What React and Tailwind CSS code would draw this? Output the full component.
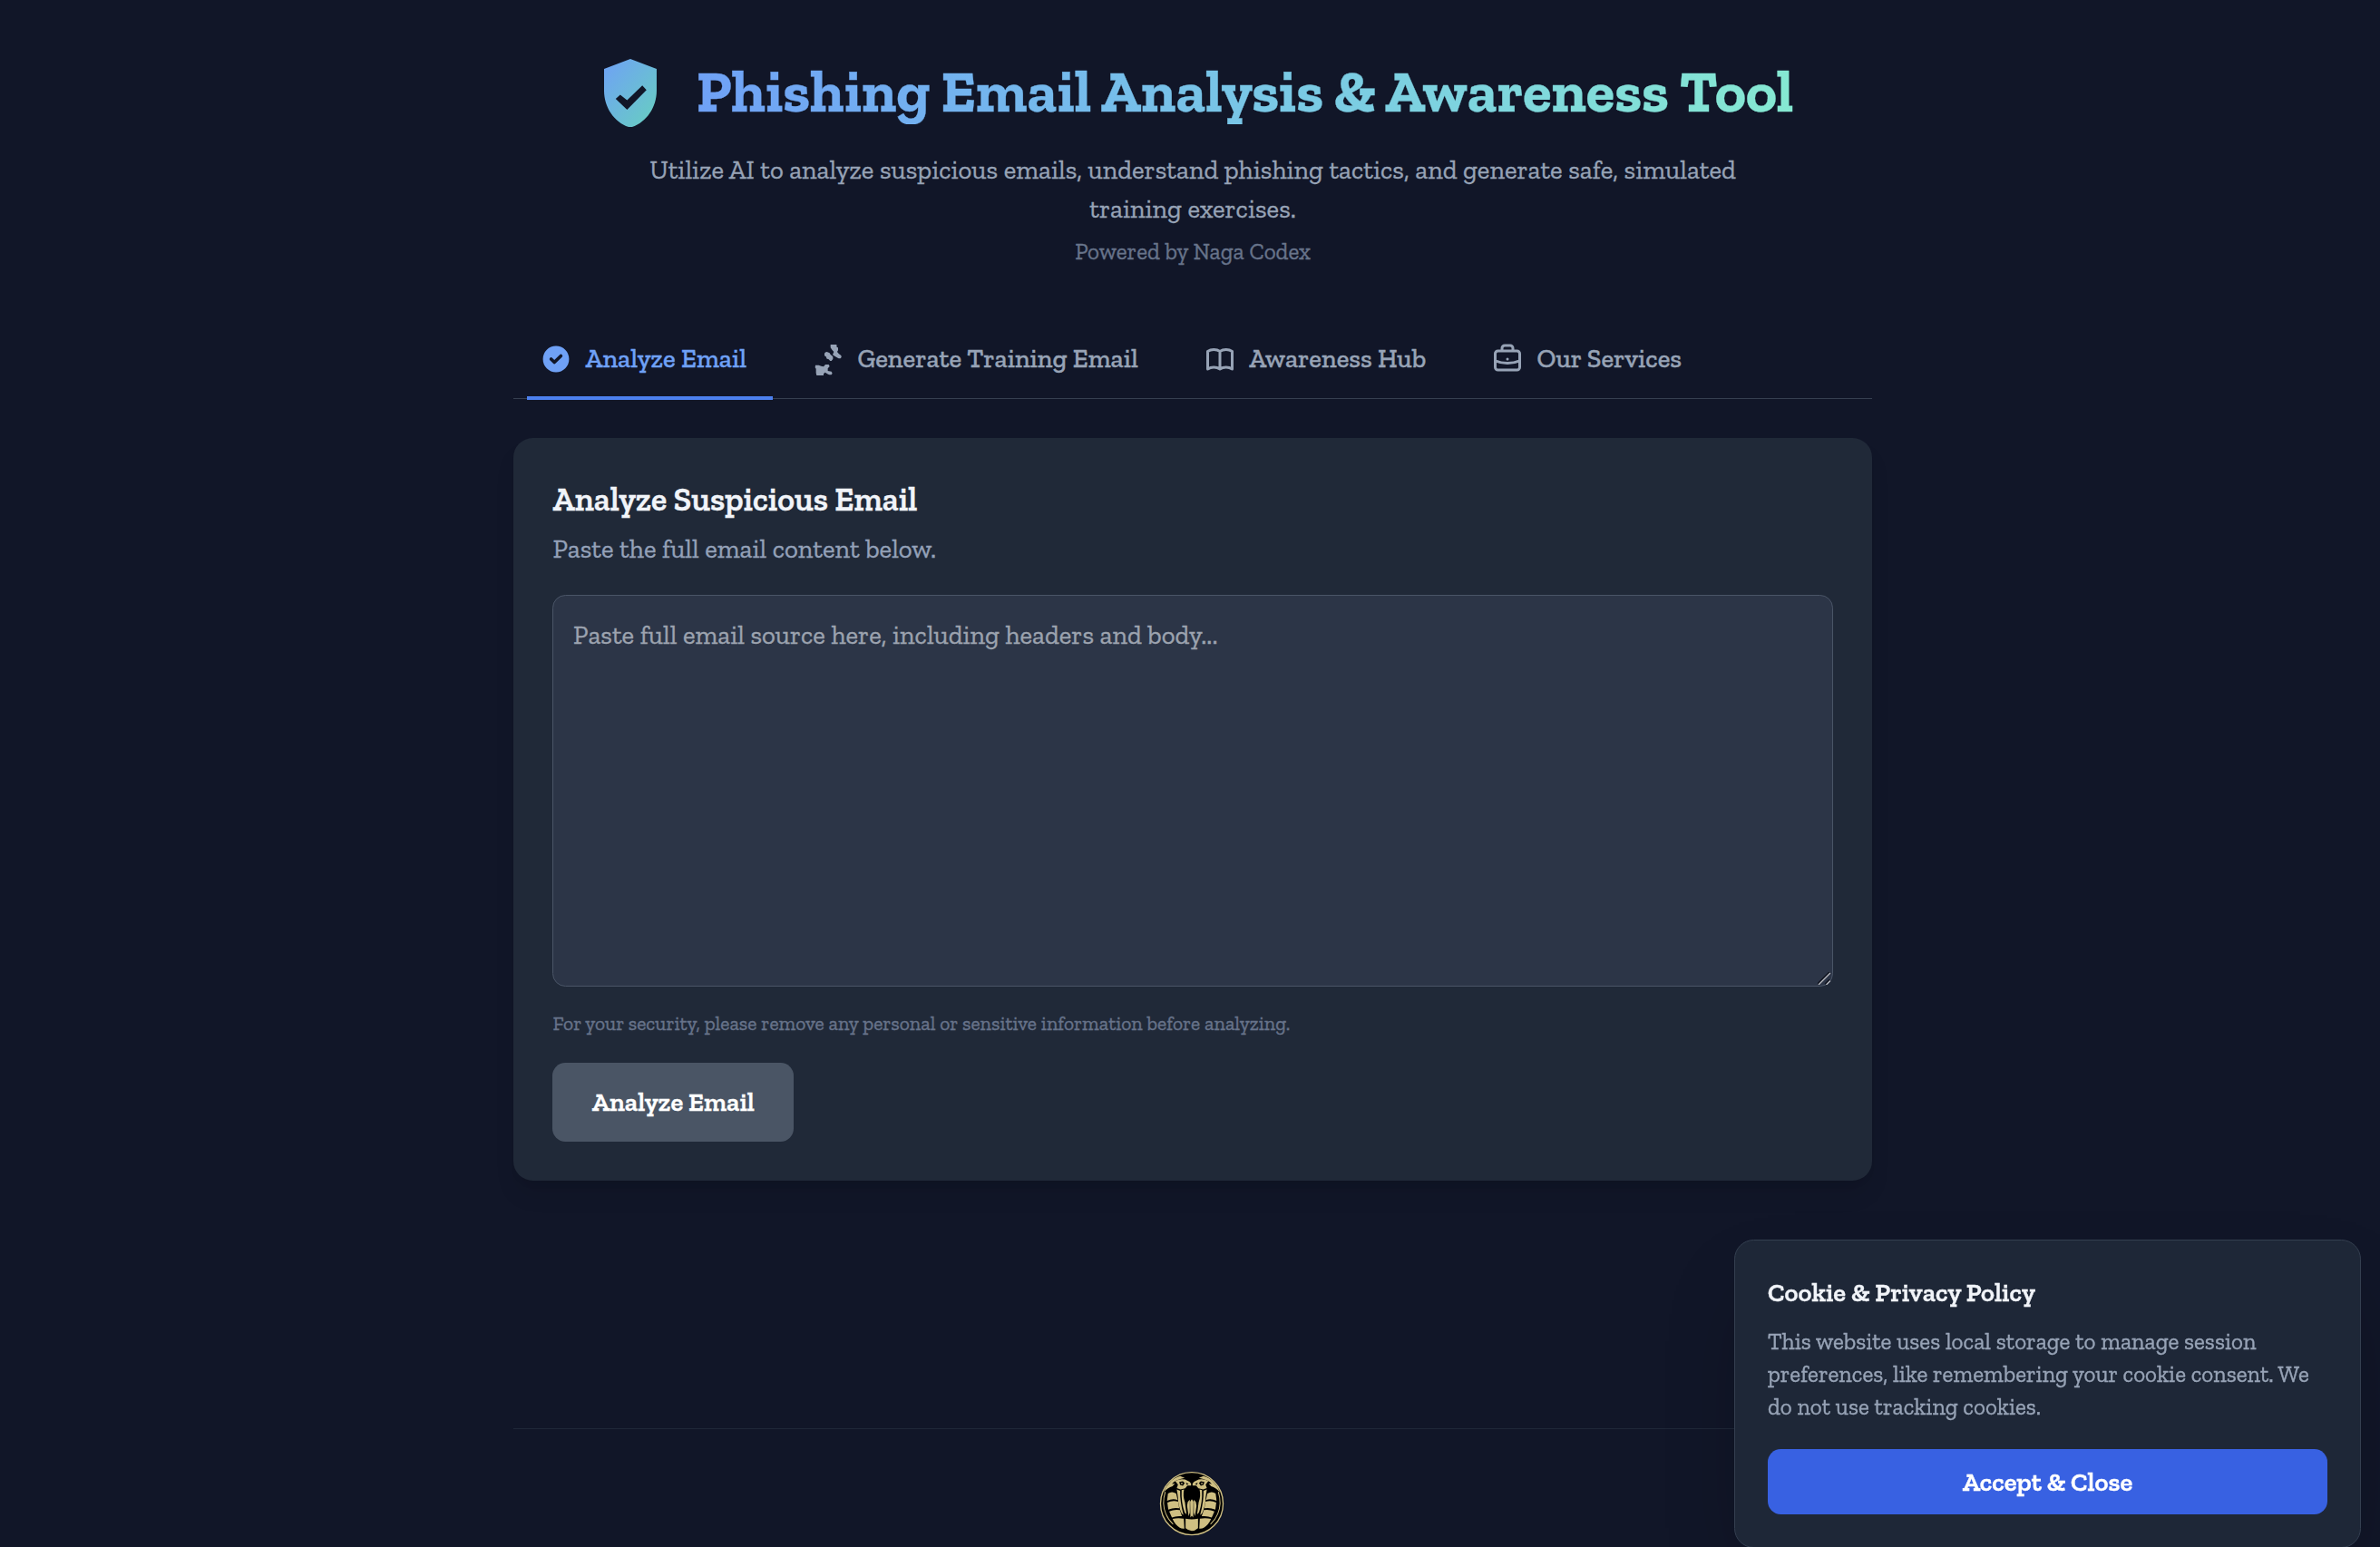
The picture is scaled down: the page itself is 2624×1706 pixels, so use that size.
import React from "react";

function ShieldIcon() {
  return (
    <svg className="h-[42px] w-[32.2px]" viewBox="0 0 58 75.6" aria-hidden="true">
      <defs>
        <linearGradient id="shield" x1="0" y1="0" x2="1" y2="1">
          <stop offset="0" stopColor="#6fa1f6" />
          <stop offset="1" stopColor="#67d0bf" />
        </linearGradient>
      </defs>
      <path
        fill="url(#shield)"
        fillRule="evenodd"
        d="M29 0 L58 11 V35 C58 54 46 71 29 75.6 C12 71 0 54 0 35 V11 Z M12.8 44 L25.4 56 L46.8 34.3 L42.2 29.3 L25.4 45.6 L17.8 39.6 Z"
      />
    </svg>
  );
}

function CheckCircleIcon() {
  return (
    <svg className="mr-2 size-5" viewBox="0 0 20 20" fill="currentColor" aria-hidden="true">
      <path
        fillRule="evenodd"
        clipRule="evenodd"
        d="M10 18a8 8 0 100-16 8 8 0 000 16zm3.707-9.293a1 1 0 00-1.414-1.414L9 10.586 7.707 9.293a1 1 0 00-1.414 1.414l2 2a1 1 0 001.414 0l4-4z"
      />
    </svg>
  );
}

function SparkIcon() {
  return (
    <svg className="mr-2 size-5" viewBox="916 24 108 108" fill="currentColor" aria-hidden="true">
      <path d="M978 30h20l1 9 4 1v9l-3 5 5 6 8 6q3 5-1 9-5 2-10-1l-9-5-8-5 4-10-6-7-5-7z" />
      <path d="M958 59q2-5 8-5l9 4 3 5 8 7v8l-5 6h-4l-6-6-5-1-3-7-5-3z" />
      <path d="M928 98h11l8 3 8 2 6-7h11l3 6-6 7v8l12 2q5 5 1 10-6 2-12-1l-10-6-5 5v5h-23l-2-8v-14l-3-4z" />
    </svg>
  );
}

function LineIcon({ d }) {
  return (
    <svg
      className="mr-2 size-5"
      viewBox="0 0 24 24"
      fill="none"
      stroke="currentColor"
      strokeWidth="2"
      strokeLinecap="round"
      strokeLinejoin="round"
      aria-hidden="true"
    >
      <path d={d} />
    </svg>
  );
}

const BOOK =
  "M12 6.253v13m0-13C10.832 5.477 9.246 5 7.5 5S4.168 5.477 3 6.253v13C4.168 18.477 5.754 18 7.5 18s3.332.477 4.5 1.253m0-13C13.168 5.477 14.754 5 16.5 5c1.747 0 3.332.477 4.5 1.253v13C19.832 18.477 18.247 18 16.5 18c-1.746 0-3.332.477-4.5 1.253";
const BRIEFCASE =
  "M21 13.255A23.931 23.931 0 0112 15c-3.183 0-6.22-.62-9-1.745M16 6V4a2 2 0 00-2-2h-4a2 2 0 00-2 2v2m4 6h.01M5 20h14a2 2 0 002-2V8a2 2 0 00-2-2H5a2 2 0 00-2 2v10a2 2 0 002 2z";

function CobraHalf() {
  return (
    <g>
      <path d="M53 97 Q66 88 80 97 L85 119 Q70 112 50 121 Z" />
      <path d="M51 127 Q68 119 87 124 L90 146 Q74 142 54 150 Z" />
      <path d="M57 156 Q74 149 92 152 L99 172 Q80 170 66 176 Z" />
      <path d="M68 181 Q84 177 105 180 L107 213 Q98 214 92 210 Q76 200 68 181 Z" />
      <path d="M82 84 L93 88 Q92 122 104 168 L98 163 Q86 138 86 110 Z" />
      <path d="M98 86 L106 84 Q101 106 109 126 L114 166 L108 160 Q96 128 98 86 Z" />
      <path d="M125 118 Q117 122 116 138 L121 172 L125 160 Z" />
      <path d="M77 56 Q92 47 109 51 L124 58 L129 64 L129 71 L117 71 L110 80 L94 84 L82 79 L86 68 Z" />
      <path d="M93 40 Q72 46 58 62 Q44 76 38 94 Q52 78 68 73 L76 64 L66 66 Q76 52 108 46 Z" />
      <path fill="none" stroke="#cfbf82" strokeWidth="3" d="M44 92 Q32 130 46 164 Q54 184 70 198" />
      <path fill="#000" d="M90 59 l12 -2 6 6 -6 9 -9 -3z M112 61 l9 5 -6 3z" />
      <path d="M96 62 l5 0 -1 5 -4 -1z" />
    </g>
  );
}

function CobraLogo() {
  return (
    <svg className="size-10" viewBox="24 22.5 215 215" aria-label="Naga Codex">
      <circle cx="131.5" cy="130.5" r="103" fill="#000" stroke="#cfbf82" strokeWidth="4" />
      <g fill="#cfbf82">
        <CobraHalf />
        <g transform="translate(263 0) scale(-1 1)">
          <CobraHalf />
        </g>
        <path d="M131.5 116 L137 124 L136 176 L131.5 170 L127 176 L126 124 Z" />
        <path d="M111 180 Q131 184 152 180 L152 211 Q142 220 131 220 Q120 219 111 211 Z" />
      </g>
    </svg>
  );
}

function ResizeGrip() {
  return (
    <svg
      className="pointer-events-none absolute right-[1.2px] bottom-[1.2px] size-2"
      viewBox="0 0 14.4 14.4"
      aria-hidden="true"
    >
      <path d="M0.5 13.5 L13.5 0.5 M8.7 13.5 L13.5 8.7" stroke="#10141f" strokeWidth="3" />
      <path d="M1 14 L14 1 M9.5 14 L14 9.5" stroke="#b9bcc3" strokeWidth="1.4" />
    </svg>
  );
}

function Tab({ icon, label, active }) {
  return (
    <button
      className={
        active
          ? "-mb-px flex items-center border-b-[2.3px] border-[#4c80ee] pt-3 pr-4 pb-[11px] pl-2 font-medium text-[#6fa1f6]"
          : "-mb-px flex items-center border-b-[2.3px] border-transparent pt-3 pr-4 pb-[11px] pl-2 font-medium text-[#97a3b6]"
      }
    >
      {icon}
      {label}
    </button>
  );
}

export default function App() {
  return (
    <div className="h-[947.7px] overflow-hidden bg-[#111628] font-['Zilla_Slab','DejaVu_Serif_Condensed',serif] text-base text-[#f1f4f9] [-webkit-text-stroke:0.2px] [zoom:1.8]">
      <div className="ml-[314.6px] w-[832px]">
        <header className="flex flex-col items-center pt-[33px] text-center">
          <div className="ml-[7.6px] flex h-12 items-center gap-6">
            <ShieldIcon />
            <h1 className="mb-[2px] bg-linear-to-r from-[#6fa1f6] to-[#86e9d2] bg-clip-text text-4xl font-bold text-transparent">
              Phishing Email Analysis &amp; Awareness Tool
            </h1>
          </div>
          <p className="mt-[11px] w-[672px] text-[#97a3b6]">
            Utilize AI to analyze suspicious emails, understand phishing tactics, and generate safe,
            simulated training exercises.
          </p>
          <p className="mt-1 text-sm text-[#67738a]">Powered by Naga Codex</p>
        </header>

        <nav className="mt-[31.8px] flex gap-4 border-b border-[#363f50] pl-2">
          <Tab active icon={<CheckCircleIcon />} label="Analyze Email" />
          <Tab icon={<SparkIcon />} label="Generate Training Email" />
          <Tab icon={<LineIcon d={BOOK} />} label="Awareness Hub" />
          <Tab icon={<LineIcon d={BRIEFCASE} />} label="Our Services" />
        </nav>

        <main className="mt-[23.6px] rounded-xl bg-[#202938] p-6 shadow-lg">
          <h2 className="mb-[4.4px] text-xl font-semibold">Analyze Suspicious Email</h2>
          <p className="mb-4 text-[#94a1b8]">Paste the full email content below.</p>
          <div className="relative">
            <textarea
              className="block h-60 w-full resize-none rounded-lg border border-[#4a5567] bg-[#2c3547] p-3 placeholder:text-[#9ca3af]"
              placeholder="Paste full email source here, including headers and body..."
            />
            <ResizeGrip />
          </div>
          <p className="mt-[14.8px] mb-4 text-xs text-[#67738a]">
            For your security, please remove any personal or sensitive information before analyzing.
          </p>
          <button className="block rounded-lg bg-[#4a5565] px-6 py-3 font-semibold text-white">
            Analyze Email
          </button>
        </main>

        <footer className="mt-[151.5px] flex justify-center border-t border-[#1f2738] pt-[26px] pr-[1px]">
          <CobraLogo />
        </footer>
      </div>

      <aside className="fixed right-[11.6px] -bottom-[0.6px] w-96 rounded-xl border border-[#343f50] bg-[#1e2737] p-5 shadow-2xl">
        <h3 className="mb-2 font-semibold">Cookie &amp; Privacy Policy</h3>
        <p className="mb-4 text-sm text-[#97a3b6]">
          This website uses local storage to manage session preferences, like remembering your
          cookie consent. We do not use tracking cookies.
        </p>
        <button className="block w-full rounded-lg bg-[#3861e2] py-2 font-semibold text-white">
          Accept &amp; Close
        </button>
      </aside>
    </div>
  );
}
